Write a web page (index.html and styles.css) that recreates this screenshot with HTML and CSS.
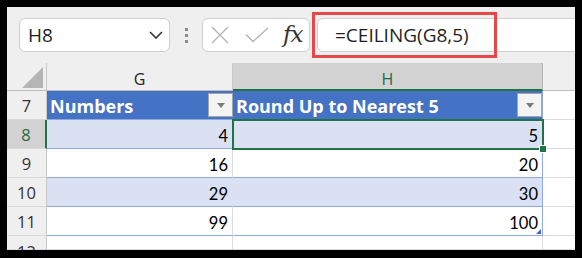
FILE: index.html
```html
<!DOCTYPE html>
<html>
<head>
<meta charset="utf-8">
<link rel="stylesheet" href="styles.css">
</head>
<body>
<div class="frame">
  <div class="app">
    <div class="toolbar">
      <div class="namebox">
        <span class="ref">H8</span>
        <svg class="chev" width="14" height="8" viewBox="0 0 14 8"><path d="M1 1 L7 7 L13 1" fill="none" stroke="#333" stroke-width="1.6"/></svg>
      </div>
      <div class="grip"><i></i><i></i><i></i></div>
      <div class="fxbox">
        <svg class="ico" width="18" height="18" viewBox="0 0 18 18"><path d="M1 1 L17 17 M17 1 L1 17" fill="none" stroke="#b3b3b3" stroke-width="1.3"/></svg>
        <svg class="ico ico-check" width="24" height="16" viewBox="0 0 24 16"><path d="M1 7.5 L8 14.5 L23 1" fill="none" stroke="#b3b3b3" stroke-width="1.3"/></svg>
        <span class="fx">fx</span>
      </div>
      <div class="formula">=CEILING(G8,5)</div>
      <div class="highlight"></div>
    </div>
    <div class="grid">
      <div class="hd corner"><div class="tri"></div></div>
      <div class="hd col">G</div>
      <div class="hd col col-sel">H</div>
      <div class="hd col col-extra"></div>

      <div class="rh">7</div>
      <div class="th">Numbers<span class="dd"><i></i></span></div>
      <div class="th th-last">Round Up to Nearest 5<span class="dd"><i></i></span></div>
      <div class="ex"></div>

      <div class="rh rh-sel">8</div>
      <div class="td band">4</div>
      <div class="td band td-last">5</div>
      <div class="ex"></div>

      <div class="rh">9</div>
      <div class="td">16</div>
      <div class="td td-last">20</div>
      <div class="ex"></div>

      <div class="rh">10</div>
      <div class="td band">29</div>
      <div class="td band td-last">30</div>
      <div class="ex"></div>

      <div class="rh">11</div>
      <div class="td">99</div>
      <div class="td td-last">100<span class="resize"></span></div>
      <div class="ex"></div>

      <div class="rh rh-cut">12</div>
      <div class="td plain"></div>
      <div class="td plain"></div>
      <div class="ex"></div>

      <div class="selection"><span class="handle"></span></div>
    </div>
  </div>
</div>
</body>
</html>
```

FILE: styles.css
```css
* { box-sizing: border-box; }
html, body { margin: 0; padding: 0; background: #000; }
.frame {
  width: 582px;
  height: 258px;
  padding: 7px 7px 8px 7px;
  background: #000;
}
.app {
  width: 568px;
  height: 243px;
  background: #efefef;
  overflow: hidden;
  position: relative;
  font-family: "Open Sans", "Noto Sans", sans-serif;
}

/* toolbar */
.toolbar {
  height: 56px;
  display: flex;
  align-items: flex-start;
  padding-top: 11px;
  position: relative;
}
.namebox {
  margin-left: 12px;
  width: 151px;
  height: 34px;
  background: #fff;
  border: 1px solid #cfcfcf;
  border-radius: 6px;
  display: flex;
  align-items: center;
  justify-content: space-between;
  padding: 0 6px 0 8px;
}
.ref { font-size: 19px; color: #1f1f1f; line-height: 1; }
.chev { display: block; }
.grip {
  margin-left: 15px;
  width: 3px;
  height: 34px;
  display: flex;
  flex-direction: column;
  justify-content: center;
  gap: 3px;
  margin-right: 14px;
}
.grip i { display: block; width: 3px; height: 3px; background: #8a8a8a; }
.fxbox {
  width: 108px;
  height: 34px;
  background: #fff;
  border: 1px solid #cfcfcf;
  border-radius: 6px;
  display: flex;
  align-items: center;
  padding-left: 8px;
}
.ico { display: block; }
.ico-check { margin-left: 16px; }
.fx {
  margin-left: 14px;
  font-family: "DejaVu Serif", "Liberation Serif", serif;
  font-style: italic;
  font-size: 23px;
  color: #333;
  line-height: 1;
  letter-spacing: -1px;
  margin-top: -2px;
}
.formula {
  margin-left: 7px;
  flex: 1;
  margin-right: -12px;
  height: 34px;
  background: #fff;
  border: 1px solid #cfcfcf;
  border-radius: 6px 0 0 6px;
  padding-left: 17px;
  display: flex;
  align-items: center;
  font-size: 19px;
  color: #1f1f1f;
}
.highlight {
  position: absolute;
  left: 305px;
  top: 5px;
  width: 185px;
  height: 46px;
  border: 3px solid #e8474a;
}

/* grid */
.grid {
  display: grid;
  grid-template-columns: 40px 186px 310px 32px;
  grid-template-rows: 28px repeat(5, 29px) 14px;
  position: relative;
  font-family: "Lato", "Open Sans", sans-serif;
}
.hd {
  background: #efefef;
  border-bottom: 1px solid #bdbdbd;
  border-right: 1px solid #c8c8c8;
}
.corner {
  display: flex;
  justify-content: flex-end;
  align-items: flex-end;
  padding: 0 3px 2px 0;
}
.tri {
  width: 21px;
  height: 21px;
  background: #b5b5b5;
  clip-path: polygon(100% 0, 100% 100%, 0 100%);
}
.col {
  display: flex;
  align-items: center;
  justify-content: center;
  padding-top: 5px;
  font-family: "Open Sans", sans-serif;
  font-size: 16px;
  color: #222;
}
.col-sel {
  background: #d2d2d2;
  color: #1d6b43;
  border-bottom: 2px solid #217346;
  border-right-color: #b5b5b5;
}
.col-extra { border-right: none; }

.rh {
  background: #efefef;
  border-right: 1px solid #c8c8c8;
  border-bottom: 1px solid #d8d8d8;
  display: flex;
  align-items: center;
  justify-content: center;
  font-family: "Open Sans", sans-serif;
  font-size: 16.5px;
  color: #333;
  padding-top: 1px;
}
.rh-sel {
  background: #d2d2d2;
  color: #1d6b43;
  border-right: 2px solid #217346;
}
.rh-cut { align-items: flex-start; padding-top: 4px; }

.th {
  background: #4472c4;
  color: #fff;
  font-family: "Open Sans", sans-serif;
  font-weight: 700;
  font-size: 18px;
  display: flex;
  align-items: center;
  justify-content: space-between;
  padding: 1px 0 0 3px;
  border-bottom: 1px solid #8ea9db;
}
.th-last { border-right: 1px solid #8ea9db; padding-right: 0; }
.dd {
  width: 25px;
  height: 24px;
  background: #f4f4f4;
  border: 1px solid #a6a6a6;
  display: flex;
  align-items: center;
  justify-content: center;
  margin-top: -1px;
}
.dd i {
  display: block;
  width: 0;
  height: 0;
  border-left: 4.5px solid transparent;
  border-right: 4.5px solid transparent;
  border-top: 5px solid #7a7a7a;
}

.td {
  background: #fff;
  border-bottom: 1px solid #8ea9db;
  border-right: 1px solid #dcdcdc;
  display: flex;
  align-items: flex-end;
  justify-content: flex-end;
  padding: 0 4px 4px 0;
  font-size: 16.5px;
  color: #000;
  line-height: 1;
  position: relative;
}
.td.band { background: #d9e1f2; border-right-color: #d9e1f2; }
.td-last, .td.band.td-last { border-right: 1px solid #8ea9db; }
.td.plain { border-bottom: 1px solid #dcdcdc; border-right: 1px solid #dcdcdc; }
.resize {
  position: absolute;
  right: 1px;
  bottom: 1px;
  width: 5px;
  height: 5px;
  background: #4a5fc1;
  clip-path: polygon(100% 0, 100% 100%, 0 100%);
}
.ex {
  background: #fff;
  border-bottom: 1px solid #dcdcdc;
}

.selection {
  position: absolute;
  left: 225px;
  top: 56px;
  width: 312px;
  height: 31px;
  border: 2px solid #217346;
  pointer-events: none;
}
.handle {
  position: absolute;
  right: -5px;
  bottom: -5px;
  width: 8px;
  height: 8px;
  background: #217346;
  border: 1px solid #fff;
}
```
